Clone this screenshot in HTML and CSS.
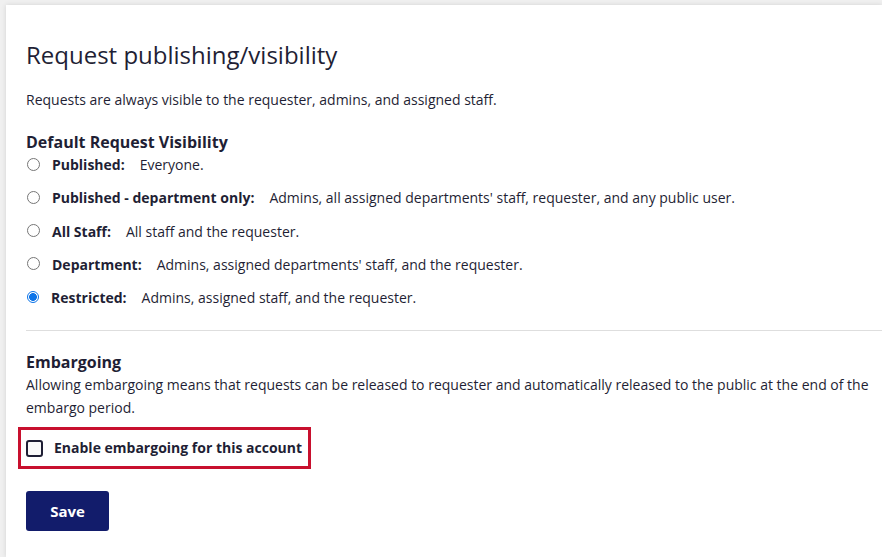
FILE: index.html
```html
<!DOCTYPE html>
<html>
<head>
<meta charset="utf-8">
<link rel="stylesheet" href="styles.css">
</head>
<body>
<div class="card">
  <h1 class="title">Request publishing/visibility</h1>
  <p class="intro">Requests are always visible to the requester, admins, and assigned staff.</p>
  <h2 class="subhead">Default Request Visibility</h2>
  <div class="options">
    <label class="opt"><span class="radio"></span><b>Published:</b><span class="desc">Everyone.</span></label>
    <label class="opt"><span class="radio"></span><b>Published - department only:</b><span class="desc">Admins, all assigned departments' staff, requester, and any public user.</span></label>
    <label class="opt"><span class="radio"></span><b>All Staff:</b><span class="desc">All staff and the requester.</span></label>
    <label class="opt"><span class="radio"></span><b>Department:</b><span class="desc">Admins, assigned departments' staff, and the requester.</span></label>
    <label class="opt"><span class="radio on"></span><b>Restricted:</b><span class="desc">Admins, assigned staff, and the requester.</span></label>
  </div>
  <hr class="rule">
  <h2 class="subhead emb">Embargoing</h2>
  <p class="embtext">Allowing embargoing means that requests can be released to requester and automatically released to the public at the end of the embargo period.</p>
  <div class="highlight">
    <label class="check"><span class="box"></span><b>Enable embargoing for this account</b></label>
  </div>
  <button class="save">Save</button>
</div>
</body>
</html>
```

FILE: styles.css
```css
html, body {
  margin: 0;
  padding: 0;
}
body {
  background: #f0f0f0;
  font-family: "Open Sans", "Noto Sans", sans-serif;
  color: #1f1f35;
  height: 557px;
  overflow: hidden;
}
.card {
  margin: 5px 0 0 6px;
  background: #fff;
  box-shadow: 0 0 5px rgba(0,0,0,0.12);
  padding: 34px 0 0 20px;
  box-sizing: border-box;
  height: 552px;
}
.title {
  margin: 0;
  font-size: 24px;
  font-weight: 400;
  line-height: 32px;
}
.intro {
  margin: 19px 0 0;
  font-size: 14px;
  line-height: 20px;
}
.subhead {
  margin: 0;
  font-size: 16px;
  font-weight: 700;
  line-height: 22px;
}
.intro + .subhead {
  margin-top: 21px;
}
.options {
  display: flex;
  flex-direction: column;
  gap: 13.25px;
  margin-top: 2px;
}
.opt {
  display: flex;
  align-items: center;
  font-size: 14px;
  line-height: 20px;
}
.opt b {
  font-weight: 700;
  margin-right: 15px;
}
.radio {
  width: 11px;
  height: 11px;
  border: 1px solid #767676;
  border-radius: 50%;
  margin: 0 12px 0 1px;
  box-sizing: content-box;
  flex: none;
  position: relative;
  top: -1px;
}
.radio.on {
  background: radial-gradient(circle, #0b73e8 0 3.6px, #fff 4.2px);
  border: 1.5px solid #0b73e8;
  width: 10px;
  height: 10px;
}
.rule {
  margin: 22px 0 0;
  border: 0;
  border-top: 1px solid #dedede;
}
.emb {
  margin-top: 20px;
}
.embtext {
  margin: 0;
  font-size: 14px;
  line-height: 23px;
  padding-right: 8px;
}
.highlight {
  margin: 8px 0 0 -8px;
  border: 3px solid #c8102e;
  width: max-content;
  padding: 7px 6px 7px 5px;
}
.check {
  display: flex;
  align-items: center;
  font-size: 14px;
  line-height: 22px;
  white-space: nowrap;
}
.box {
  width: 13px;
  height: 13px;
  border: 2px solid #1f1f35;
  border-radius: 3px;
  margin-right: 11px;
  flex: none;
  background: #fafafa;
}
.save {
  margin-top: 22px;
  background: #121c6b;
  color: #fff;
  border: 0;
  border-radius: 3px;
  width: 83px;
  height: 40px;
  font-family: "Open Sans", sans-serif;
  font-weight: 700;
  font-size: 15px;
  display: block;
  cursor: pointer;
}
```
